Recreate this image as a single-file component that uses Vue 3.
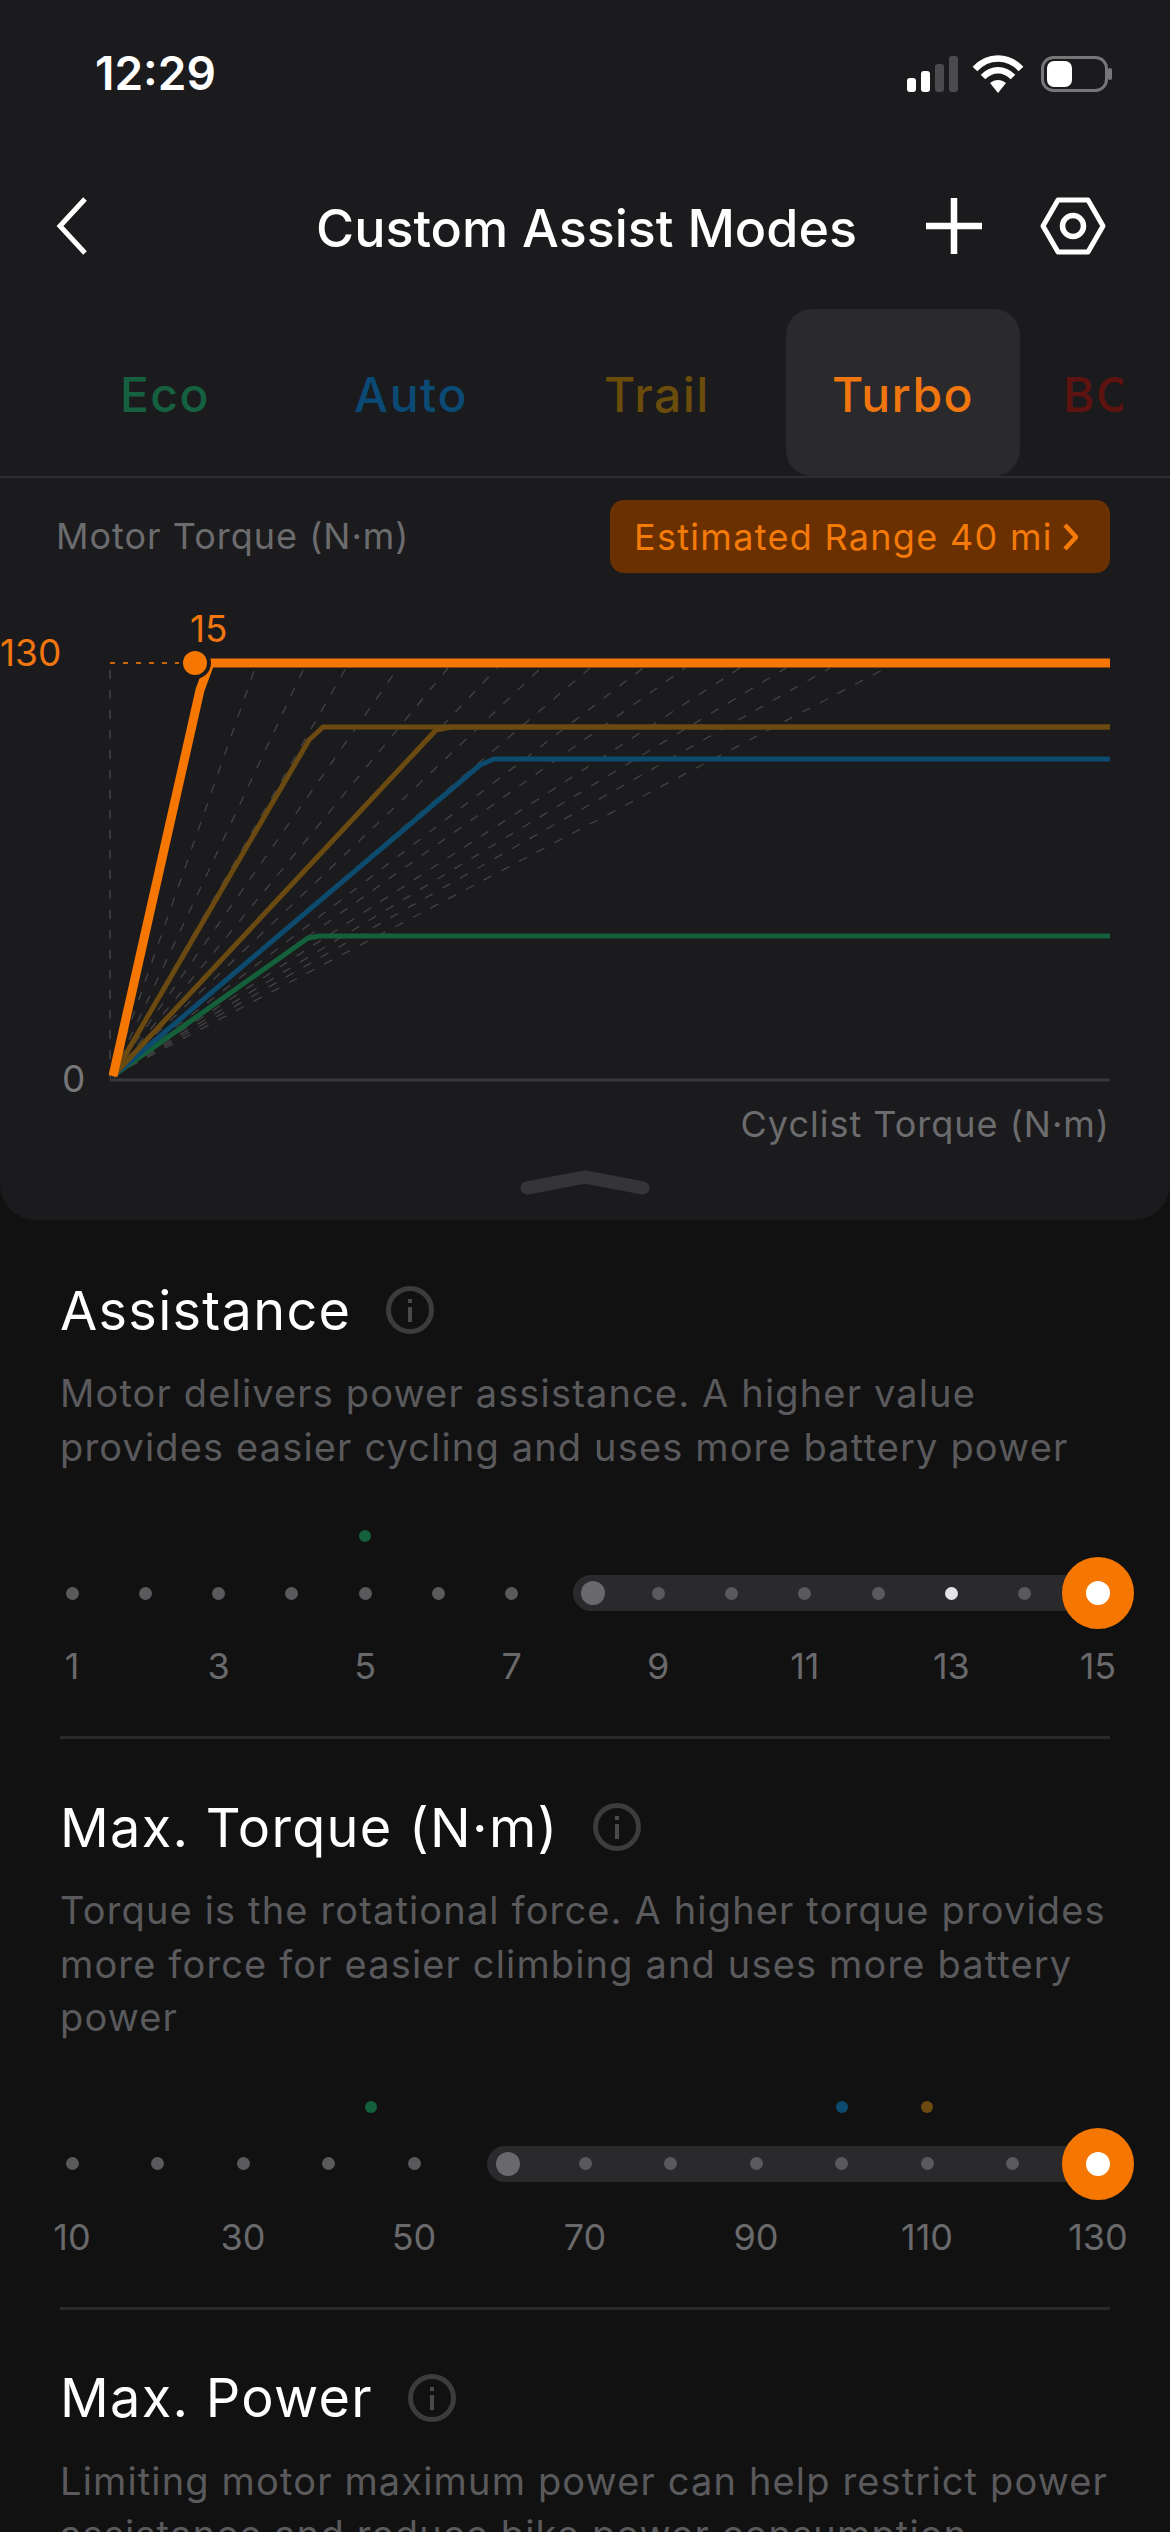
<script setup>
const tabs = [
  { name: 'Eco', color: '#14603f' },
  { name: 'Auto', color: '#0a4a75' },
  { name: 'Trail', color: '#6a4c0b' },
  { name: 'Turbo', color: '#f1760f', active: true },
  { name: 'BC', color: '#5e1310', short: true }
]

// where each dashed guide of the fan meets the top of the chart
const fanEnds = [255, 304, 346, 398, 448, 497, 541, 590, 643, 685, 740, 786, 830, 886]

const curves = [
  { d: 'M113 1076 L308 938 L320 936 L1110 936', color: '#14603a', width: 5 },
  { d: 'M113 1076 L480 765 L494 759 L1110 759', color: '#0c4a6e', width: 5 },
  { d: 'M113 1076 L436 730 L451 727 L1110 727', color: '#6a4a10', width: 5 },
  { d: 'M113 1076 L309 740 L323 727 L1110 727', color: '#6a4a10', width: 5 },
  { d: 'M113 1076 L200 690 L210 663 L1110 663', color: '#f57600', width: 9 }
]

const sections = [
  {
    title: 'Assistance',
    desc: ['Motor delivers power assistance. A higher value', 'provides easier cycling and uses more battery power'],
    stops: 15,
    start: 8,
    trackLeft: 513,
    labels: i => (i % 2 === 0 ? i + 1 : ''),
    bright: [13],
    markers: { 5: { color: '#14603a', shift: 0 } }
  },
  {
    title: 'Max. Torque (N·m)',
    desc: [
      'Torque is the rotational force. A higher torque provides',
      'more force for easier climbing and uses more battery',
      'power'
    ],
    stops: 13,
    start: 6,
    trackLeft: 427,
    labels: i => (i % 2 === 0 ? (i + 1) * 10 : ''),
    bright: [],
    markers: {
      5: { color: '#14603a', shift: -43 },
      10: { color: '#0c4a6e', shift: 0 },
      11: { color: '#6a4a10', shift: 0 }
    }
  },
  {
    title: 'Max. Power',
    desc: [
      'Limiting motor maximum power can help restrict power',
      'assistance and reduce bike power consumption'
    ],
    stops: 0
  }
]

const range = n => Array.from({ length: n }, (_, i) => i + 1)
</script>

<template>
  <div class="screen">
    <div class="panel">
      <div class="status">
        <span class="time">12:29</span>
        <svg class="status-icons" width="220" height="50" viewBox="0 0 220 50">
          <rect x="0" y="30" width="9" height="14" rx="3" fill="#fff" />
          <rect x="14" y="23" width="9" height="21" rx="3" fill="#fff" />
          <rect x="28" y="16" width="9" height="28" rx="3" fill="#4b4b4d" />
          <rect x="42" y="8" width="9" height="36" rx="3" fill="#4b4b4d" />
          <path d="M68 21 C81 7 101 7 114 21" fill="none" stroke="#fff" stroke-width="6.5" />
          <path d="M76 29 C85 20 97 20 106 29" fill="none" stroke="#fff" stroke-width="6.5" />
          <path d="M83 35 C88 31 94 31 99 35 L91 45 Z" fill="#fff" />
          <rect x="135.500" y="9.500" width="64" height="33" rx="11" fill="none" stroke="#77777a" stroke-width="3" />
          <rect x="140" y="13" width="25" height="26" rx="7" fill="#fff" />
          <rect x="201" y="20" width="4" height="12" rx="2" fill="#77777a" />
        </svg>
      </div>

      <div class="nav">
        <svg class="back" width="32" height="58" viewBox="0 0 32 58">
          <path d="M29 2 L4 29 L29 56" fill="none" stroke="#fff" stroke-width="5" />
        </svg>
        <h1 class="nav-title">Custom Assist Modes</h1>
        <svg class="plus" width="58" height="58" viewBox="0 0 58 58">
          <path d="M29 1 V57 M1 29 H57" fill="none" stroke="#fff" stroke-width="6.500" />
        </svg>
        <svg class="hex" width="66" height="58" viewBox="0 0 66 58">
          <path d="M18 3 H48 L63 29 L48 55 H18 L3 29 Z" fill="none" stroke="#fff" stroke-width="5" stroke-linejoin="round" />
          <circle cx="33" cy="29" r="10.500" fill="none" stroke="#fff" stroke-width="5.500" />
        </svg>
      </div>

      <div class="tabs">
        <div
          v-for="tab in tabs"
          :key="tab.name"
          :class="{ tab: true, 'tab-active': tab.active, 'tab-short': tab.short }"
          :style="{ color: tab.color }"
        >
          {{ tab.name }}
        </div>
      </div>

      <div class="chart-head">
        <span class="axis-label">Motor Torque (N·m)</span>
        <div class="range">
          <span>Estimated Range 40 mi</span>
          <svg width="15" height="28" viewBox="0 0 15 28">
            <path d="M2 2 L13 14 L2 26" fill="none" stroke="#f47a0a" stroke-width="4.500" />
          </svg>
        </div>
      </div>

      <svg class="chart" width="1170" height="510" viewBox="0 590 1170 510">
        <line x1="110" y1="670" x2="110" y2="1078" stroke="#434345" stroke-width="1.500" stroke-dasharray="9 11" />
        <line
          v-for="x in fanEnds"
          :key="x"
          x1="112"
          y1="1076"
          :x2="x"
          y2="668"
          stroke="#434345"
          stroke-width="1.300"
          stroke-dasharray="9 11"
        />
        <line x1="110" y1="1080" x2="1110" y2="1080" stroke="#39393b" stroke-width="3" />
        <line x1="110" y1="663" x2="180" y2="663" stroke="#f57600" stroke-width="2" stroke-dasharray="5 8" opacity="0.8" />
        <path
          v-for="curve in curves"
          :key="curve.d"
          :d="curve.d"
          fill="none"
          :stroke="curve.color"
          :stroke-width="curve.width"
          stroke-linejoin="round"
        />
        <circle cx="195" cy="663" r="16" fill="#1b1b1d" />
        <circle cx="195" cy="663" r="12" fill="#f57600" />
        <text x="0" y="666" class="chart-num" fill="#f1760f">130</text>
        <text x="190" y="642" class="chart-num" fill="#f1760f">15</text>
        <text x="62" y="1092" class="chart-num" fill="#77777a">0</text>
      </svg>

      <div class="x-label">Cyclist Torque (N·m)</div>

      <svg class="handle" width="130" height="30" viewBox="0 0 130 30">
        <path d="M7 20 L65 9 L123 20" fill="none" stroke="#353537" stroke-width="13" stroke-linecap="round" stroke-linejoin="round" />
      </svg>
    </div>

    <section v-for="(section, s) in sections" :key="section.title" :class="{ section: true, 'section-last': s === 2 }">
      <div class="title-row">
        <h2 class="title">{{ section.title }}</h2>
        <svg width="50" height="50" viewBox="0 0 50 50">
          <circle cx="25" cy="25" r="21.500" fill="none" stroke="#3c3c3e" stroke-width="5" />
          <rect x="23" y="22" width="4" height="15" fill="#4a4a4c" />
          <rect x="23" y="14" width="4" height="4" fill="#4a4a4c" />
        </svg>
      </div>
      <p class="desc">
        <span v-for="line in section.desc" :key="line">{{ line }}</span>
      </p>

      <template v-if="section.stops">
        <div class="markers">
          <div v-for="n in range(section.stops)" :key="n" class="cell">
            <i
              v-if="section.markers[n]"
              class="marker"
              :style="{ background: section.markers[n].color, transform: `translateX(${section.markers[n].shift}px)` }"
            ></i>
          </div>
        </div>

        <div class="slider">
          <div class="track" :style="{ left: section.trackLeft + 'px' }"></div>
          <div v-for="n in range(section.stops)" :key="n" class="cell">
            <i v-if="n === section.stops" class="thumb"></i>
            <i v-else-if="n === section.start" class="start"></i>
            <i v-else :class="{ dot: true, 'dot-bright': section.bright.includes(n) }"></i>
          </div>
        </div>

        <div class="labels">
          <div v-for="n in range(section.stops)" :key="n" class="cell">
            <span>{{ section.labels(n - 1) }}</span>
          </div>
        </div>
      </template>
    </section>
  </div>
</template>

<style scoped>
.screen {
  width: 1170px;
  height: 2532px;
  overflow: hidden;
  background: #111112;
  font-family: Inter, 'Noto Sans', sans-serif;
}

.panel {
  height: 1220px;
  background: #1b1b1d;
  border-radius: 0 0 36px 36px;
  display: flex;
  flex-direction: column;
}

.status {
  flex: none;
  height: 110px;
  padding: 36px 43px 0 95px;
  box-sizing: border-box;
  display: flex;
  justify-content: space-between;
  align-items: center;
}

.time {
  color: #fff;
  font-size: 46px;
  font-weight: 600;
}

.nav {
  flex: none;
  height: 115px;
  margin-top: 58px;
  padding: 0 64px 0 56px;
  display: flex;
  align-items: center;
}

.nav-title {
  margin: 5px 0 0 228px;
  color: #fff;
  font-size: 52px;
  font-weight: 500;
  white-space: nowrap;
}

.plus {
  margin-left: auto;
}

.hex {
  margin-left: 57px;
}

.tabs {
  flex: none;
  height: 167px;
  margin: 26px 47px 0 48px;
  display: flex;
  gap: 12px;
  overflow: hidden;
}

.tab {
  flex: 0 0 234px;
  display: flex;
  align-items: center;
  justify-content: center;
  font-size: 48px;
  font-weight: 500;
  letter-spacing: 1.500px;
  border-radius: 26px;
  padding-top: 4px;
  box-sizing: border-box;
}

.tab-active {
  background: #2a2a2c;
}

.tab-short {
  flex: 0 0 auto;
  padding-left: 31px;
}

.chart-head {
  flex: none;
  border-top: 2px solid #2e2e30;
  height: 114px;
  padding: 22px 60px 0 56px;
  box-sizing: border-box;
  display: flex;
  justify-content: space-between;
  align-items: flex-start;
}

.axis-label {
  color: #6c6c6e;
  font-size: 36px;
  letter-spacing: 1px;
  line-height: 73px;
}

.range {
  height: 73px;
  width: 500px;
  box-sizing: border-box;
  padding: 0 32px 0 24px;
  background: #6a3000;
  border-radius: 14px;
  display: flex;
  align-items: center;
  justify-content: space-between;
  color: #f47a0a;
  font-size: 36px;
  letter-spacing: 1.300px;
  white-space: nowrap;
}

.chart {
  display: block;
  flex: none;
}

.chart-num {
  font-size: 37px;
  font-family: Inter, 'Noto Sans', sans-serif;
}

.x-label {
  flex: none;
  padding-right: 60px;
  text-align: right;
  color: #6c6c6e;
  font-size: 36px;
  letter-spacing: 1px;
  line-height: 48px;
}

.handle {
  display: block;
  flex: none;
  margin: 20px 0 0 520px;
}

.section {
  margin: 0 60px;
  padding: 60px 0 48px;
  border-bottom: 3px solid #2a2a2c;
}

.section + .section {
  padding-top: 58px;
}

.section-last {
  border-bottom: 0;
}

.title-row {
  height: 60px;
  display: flex;
  align-items: center;
  gap: 34px;
}

.title {
  margin: 0;
  color: #fff;
  font-size: 54px;
  font-weight: 400;
  letter-spacing: 1.300px;
  white-space: nowrap;
}

.desc {
  margin: 27px 0 0;
  color: #5a5a5c;
  font-size: 38px;
  line-height: 53.500px;
  letter-spacing: 1.150px;
}

.desc span {
  display: block;
  white-space: nowrap;
}

.markers,
.slider,
.labels {
  display: flex;
  justify-content: space-between;
  position: relative;
}

.cell {
  width: 24px;
  display: flex;
  justify-content: center;
  align-items: center;
}

.markers {
  margin-top: 56px;
  height: 12px;
}

.marker {
  flex: none;
  width: 12px;
  height: 12px;
  border-radius: 50%;
}

.slider {
  margin-top: 15px;
  height: 72px;
  align-items: center;
}

.track {
  position: absolute;
  top: 18px;
  right: 12px;
  height: 36px;
  background: #2a2a2c;
  border-radius: 18px 0 0 18px;
}

.dot {
  position: relative;
  flex: none;
  width: 13px;
  height: 13px;
  border-radius: 50%;
  background: #5a5a5c;
}

.dot-bright {
  background: #e4e4e6;
}

.start {
  position: relative;
  left: 8px;
  flex: none;
  width: 24px;
  height: 24px;
  border-radius: 50%;
  background: #69696b;
}

.thumb {
  position: relative;
  flex: none;
  width: 72px;
  height: 72px;
  box-sizing: border-box;
  border: 24px solid #f57600;
  border-radius: 50%;
  background: #fff;
}

.labels {
  margin-top: 15px;
  height: 44px;
  color: #69696b;
  font-size: 36px;
  line-height: 44px;
}

.labels span {
  white-space: nowrap;
}
</style>
